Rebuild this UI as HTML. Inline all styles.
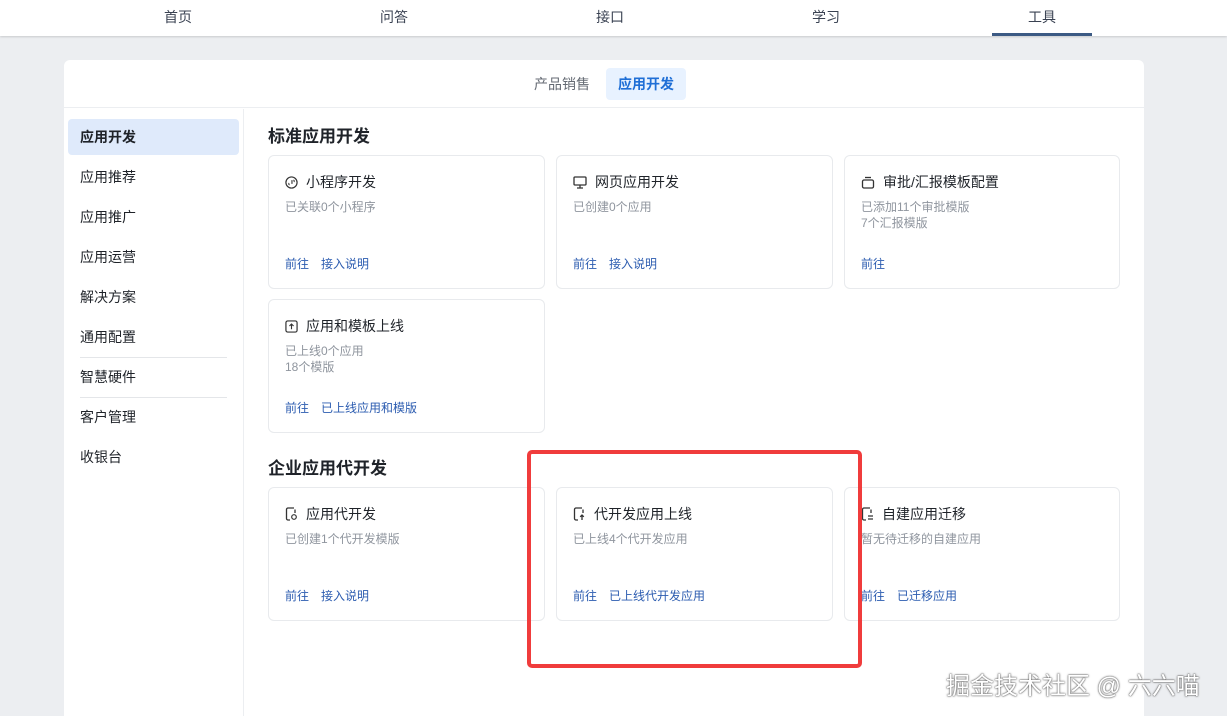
<!DOCTYPE html>
<html><head><meta charset="utf-8"><style>
*{box-sizing:border-box;margin:0;padding:0}
html,body{width:1227px;height:716px;overflow:hidden}
body{background:#eceef1;font-family:"Liberation Sans","Noto Sans CJK SC",sans-serif;position:relative;color:#1f2329}
.nav{position:absolute;left:0;top:0;width:1227px;height:36px;background:#fff;box-shadow:0 1px 2px rgba(0,0,0,.15)}
.nav span{position:absolute;top:7px;font-size:14px;color:#3a4252;width:100px;text-align:center}
.nav .u{position:absolute;left:992px;top:33px;width:100px;height:3px;background:#3c5a84}
.panel{position:absolute;left:64px;top:60px;width:1080px;height:656px;background:#fff;border-radius:6px 6px 0 0}
.tabs{position:absolute;left:0;top:0;width:1080px;height:48px;border-bottom:1px solid #eceef1}
.tab{position:absolute;top:8px;height:32px;line-height:32px;font-size:14px;padding:0 12px;color:#646a73;border-radius:4px}
.tab.a{background:#e8f2ff;color:#1f6fd6;font-weight:bold}
.side{position:absolute;left:0;top:49px;width:180px;height:607px;border-right:1px solid #eceef1}
.si{position:absolute;left:4px;width:171px;height:36px;line-height:36px;padding-left:12px;font-size:14px;color:#1f2329;border-radius:4px}
.si.a{background:#dfeafb;font-weight:bold}
.sep{position:absolute;left:16px;width:147px;height:1px;background:#e4e6e9}
h3{position:absolute;font-size:17px;font-weight:bold;color:#1f2329}
.card{position:absolute;width:277px;height:134px;border:1px solid #e8eaed;border-radius:6px;background:#fff}
.card .t{position:absolute;left:16px;top:16px;font-size:14px;color:#1f2329;display:flex;align-items:center}
.card .t svg{margin-right:8px}
.card .d{position:absolute;left:16px;top:43px;font-size:12px;color:#8f959e;line-height:16px}
.card .l{position:absolute;left:16px;top:99px;font-size:12px;color:#2c5cb0}
.card .l span{margin-right:12px}
.red{position:absolute;left:527px;top:450px;width:335px;height:218px;border:4px solid #f03c3c;border-radius:5px}
.wm{position:absolute;left:946px;top:666px;font-size:24px;color:#fff;text-shadow:0 0 2px #555,0 0 1px #333}
</style></head><body>
<div class="nav">
<span style="left:128px">首页</span><span style="left:344px">问答</span><span style="left:560px">接口</span><span style="left:776px">学习</span><span style="left:992px">工具</span>
<div class="u"></div></div>
<div class="panel">
<div class="tabs"><div class="tab" style="left:458px">产品销售</div><div class="tab a" style="left:542px">应用开发</div></div>
<div class="side">
<div class="si a" style="top:10px">应用开发</div>
<div class="si" style="top:50px">应用推荐</div>
<div class="si" style="top:90px">应用推广</div>
<div class="si" style="top:130px">应用运营</div>
<div class="si" style="top:170px">解决方案</div>
<div class="si" style="top:210px">通用配置</div>
<div class="sep" style="top:248px"></div>
<div class="si" style="top:250px">智慧硬件</div>
<div class="sep" style="top:288px"></div>
<div class="si" style="top:290px">客户管理</div>
<div class="si" style="top:330px">收银台</div>
</div>
</div>
<h3 style="left:268px;top:122px">标准应用开发</h3>
<h3 style="left:268px;top:454px">企业应用代开发</h3>

<div class="card" style="left:268px;top:155px"><div class="t"><svg width="13" height="13" viewBox="0 0 14 14"><circle cx="7" cy="7" r="6" fill="none" stroke="#333" stroke-width="1.3"/><path d="M5 9.5c-1 0-1.3-1.3-.5-1.8M9 4.5c1 0 1.3 1.3.5 1.8M7.5 4.5v4" fill="none" stroke="#333" stroke-width="1.2"/></svg>小程序开发</div><div class="d">已关联0个小程序</div><div class="l"><span>前往</span><span>接入说明</span></div></div>
<div class="card" style="left:556px;top:155px"><div class="t"><svg width="14" height="13" viewBox="0 0 14 13"><rect x="1" y="1" width="12" height="8" rx="1" fill="none" stroke="#333" stroke-width="1.3"/><path d="M4 12h6M7 9v3" stroke="#333" stroke-width="1.3"/></svg>网页应用开发</div><div class="d">已创建0个应用</div><div class="l"><span>前往</span><span>接入说明</span></div></div>
<div class="card" style="left:844px;top:155px;width:276px"><div class="t"><svg width="14" height="13" viewBox="0 0 14 13"><rect x="1.5" y="4" width="11" height="8" rx="1.5" fill="none" stroke="#333" stroke-width="1.3"/><path d="M4 1.5h6" stroke="#333" stroke-width="1.3"/></svg>审批/汇报模板配置</div><div class="d">已添加11个审批模版<br>7个汇报模版</div><div class="l"><span>前往</span></div></div>
<div class="card" style="left:268px;top:299px"><div class="t"><svg width="13" height="13" viewBox="0 0 14 14"><rect x="1" y="1" width="12" height="12" rx="2" fill="none" stroke="#333" stroke-width="1.3"/><path d="M7 10V4.5M4.8 6.5L7 4.3l2.2 2.2" fill="none" stroke="#333" stroke-width="1.2"/></svg>应用和模板上线</div><div class="d">已上线0个应用<br>18个模版</div><div class="l"><span>前往</span><span>已上线应用和模版</span></div></div>

<div class="card" style="left:268px;top:487px"><div class="t"><svg width="13" height="14" viewBox="0 0 13 14"><path d="M9 1H3a1.5 1.5 0 0 0-1.5 1.5v9A1.5 1.5 0 0 0 3 13h2M10 6V2.5" fill="none" stroke="#333" stroke-width="1.3"/><circle cx="9" cy="10" r="2.3" fill="none" stroke="#333" stroke-width="1.2"/></svg>应用代开发</div><div class="d">已创建1个代开发模版</div><div class="l"><span>前往</span><span>接入说明</span></div></div>
<div class="card" style="left:556px;top:487px"><div class="t"><svg width="13" height="14" viewBox="0 0 13 14"><path d="M9 1H3a1.5 1.5 0 0 0-1.5 1.5v9A1.5 1.5 0 0 0 3 13h2M10 6V2.5M9 13V8M7.2 9.8L9 8l1.8 1.8" fill="none" stroke="#333" stroke-width="1.3"/></svg>代开发应用上线</div><div class="d">已上线4个代开发应用</div><div class="l"><span>前往</span><span>已上线代开发应用</span></div></div>
<div class="card" style="left:844px;top:487px;width:276px"><div class="t"><svg width="13" height="14" viewBox="0 0 13 14"><path d="M9 1H3a1.5 1.5 0 0 0-1.5 1.5v9A1.5 1.5 0 0 0 3 13h2M10 6V2.5M7 9h5M7 12h5" fill="none" stroke="#333" stroke-width="1.3"/></svg>自建应用迁移</div><div class="d">暂无待迁移的自建应用</div><div class="l"><span>前往</span><span>已迁移应用</span></div></div>

<div class="red"></div>
<div class="wm">掘金技术社区 @ 六六喵</div>
</body></html>
